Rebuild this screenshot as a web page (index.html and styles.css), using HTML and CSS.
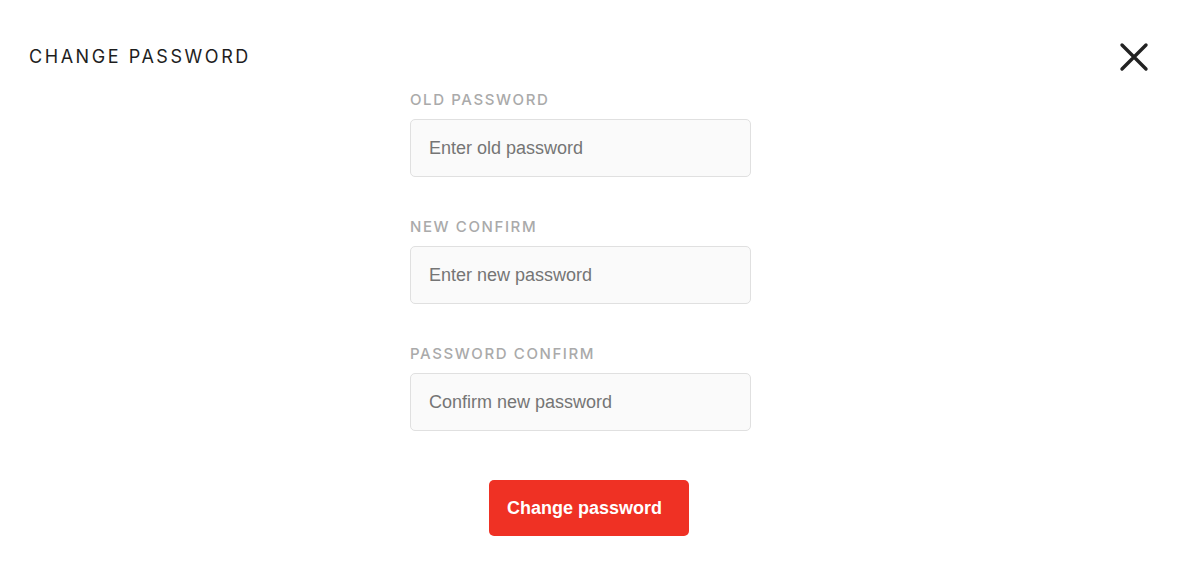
FILE: index.html
```html
<!DOCTYPE html>
<html>
<head>
<meta charset="utf-8">
<link rel="stylesheet" href="styles.css">
</head>
<body>
<div class="modal">
  <div class="header">
    <h1 class="title">CHANGE PASSWORD</h1>
    <button class="close" aria-label="Close">
      <svg width="30" height="30" viewBox="0 0 30 30"><path d="M3 3 L27 27 M27 3 L3 27" stroke="#222" stroke-width="3.4" stroke-linecap="round" fill="none"/></svg>
    </button>
  </div>
  <form class="form">
    <div class="field">
      <label class="label">OLD PASSWORD</label>
      <input class="input" type="password" placeholder="Enter old password">
    </div>
    <div class="field">
      <label class="label">NEW CONFIRM</label>
      <input class="input" type="password" placeholder="Enter new password">
    </div>
    <div class="field">
      <label class="label">PASSWORD CONFIRM</label>
      <input class="input" type="password" placeholder="Confirm new password">
    </div>
    <button class="submit" type="button">Change password</button>
  </form>
</div>
</body>
</html>
```
FILE: styles.css
```css
html, body { margin: 0; padding: 0; background: #fff; }
.modal { padding: 0 40px 0 29px; }
.header {
  display: flex;
  justify-content: space-between;
  align-items: center;
  padding-top: 42px;
}
.title {
  margin: 0;
  font-family: "Inter", "Roboto", sans-serif;
  font-weight: 400;
  font-size: 18px;
  letter-spacing: 2.55px;
  color: #1e1e1e;
  line-height: 28px;
}
.close {
  border: 0; background: none; padding: 0; margin-right: 0;
  width: 30px; height: 30px; display: flex;
}
.form {
  width: 358px;
  margin-left: 381px;
  margin-top: 19px;
  display: flex;
  flex-direction: column;
}
.field { display: flex; flex-direction: column; margin-bottom: 41px; }
.label {
  font-family: "Inter", "Roboto", sans-serif;
  font-size: 15px;
  letter-spacing: 1.6px;
  color: #aaa;
  line-height: 18px;
  margin-bottom: 10px;
  font-weight: 500;
}
.input {
  box-sizing: border-box;
  width: 341px;
  height: 58px;
  border: 1px solid #e0e0e0;
  border-radius: 5px;
  background: #fafafa;
  padding: 0 18px;
  font-family: "Liberation Sans", Arial, sans-serif;
  font-size: 18px;
  color: #333;
  outline: none;
}
.input::placeholder { color: #757575; }
.submit {
  align-self: center;
  margin-top: 8px;
  width: 200px;
  height: 56px;
  border: 0;
  border-radius: 5px;
  background: #ef3124;
  color: #fff;
  font-family: "Liberation Sans", Arial, sans-serif;
  font-weight: 700;
  font-size: 18px;
  text-align: left;
  padding: 0 0 0 18px;
}
```
